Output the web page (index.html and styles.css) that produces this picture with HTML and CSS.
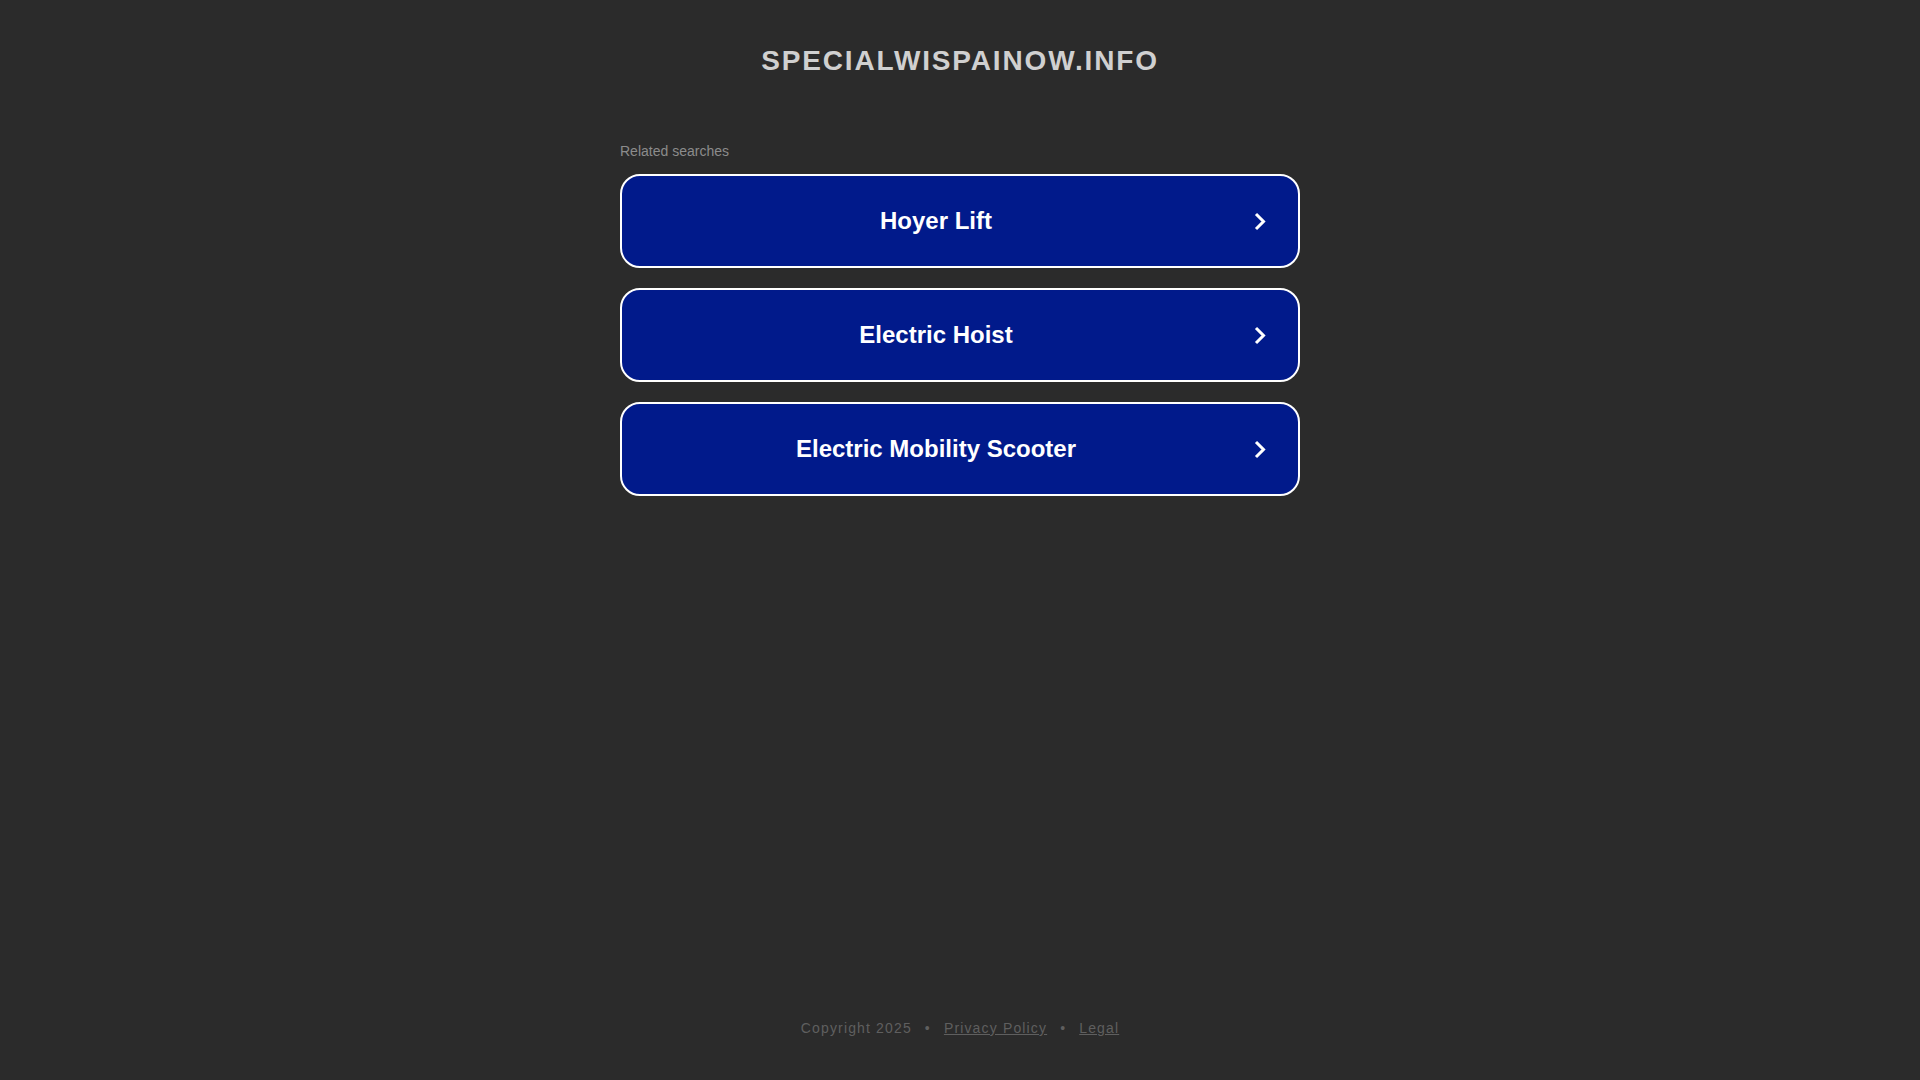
FILE: index.html
```html
<!DOCTYPE html>
<html lang="en">
<head>
<meta charset="utf-8">
<title>specialwispainow.info</title>
<link rel="stylesheet" href="styles.css">
</head>
<body>
<div class="page">
  <header class="header">
    <h1 class="domain">specialwispainow.info</h1>
  </header>
  <main class="content">
    <p class="related">Related searches</p>
    <div class="links">
      <a class="link" href="#"><span class="link-text">Hoyer Lift</span><svg class="chev" viewBox="0 0 12 19" width="12" height="19"><path d="M2 2 L9.5 9.5 L2 17" fill="none" stroke="#fff" stroke-width="3"/></svg></a>
      <a class="link" href="#"><span class="link-text">Electric Hoist</span><svg class="chev" viewBox="0 0 12 19" width="12" height="19"><path d="M2 2 L9.5 9.5 L2 17" fill="none" stroke="#fff" stroke-width="3"/></svg></a>
      <a class="link" href="#"><span class="link-text">Electric Mobility Scooter</span><svg class="chev" viewBox="0 0 12 19" width="12" height="19"><path d="M2 2 L9.5 9.5 L2 17" fill="none" stroke="#fff" stroke-width="3"/></svg></a>
    </div>
  </main>
  <footer class="footer">
    <span class="copy">Copyright 2025</span>
    <span class="dot">•</span>
    <a class="flink" href="#">Privacy Policy</a>
    <span class="dot">•</span>
    <a class="flink" href="#">Legal</a>
  </footer>
</div>
</body>
</html>
```

FILE: styles.css
```css
html, body {
  margin: 0;
  padding: 0;
  background: #2b2b2b;
}

body {
  font-family: "Liberation Sans", Arial, sans-serif;
}

.page {
  min-height: 100vh;
  display: flex;
  flex-direction: column;
  align-items: center;
}

.header {
  padding-top: 40px;
}

.domain {
  margin: 0;
  font-size: 28px;
  line-height: 42px;
  font-weight: bold;
  text-transform: uppercase;
  letter-spacing: 1.85px;
  color: #d0d0d0;
  text-align: center;
}

.content {
  width: 680px;
  margin-top: 59px;
}

.related {
  margin: 0 0 13px 0;
  font-size: 14px;
  line-height: 20px;
  color: #8c8c8c;
}

.links {
  display: flex;
  flex-direction: column;
  gap: 20px;
}

.link {
  display: flex;
  align-items: center;
  height: 94px;
  box-sizing: border-box;
  border: 2px solid #ffffff;
  border-radius: 20px;
  background: #011a8b;
  color: #ffffff;
  text-decoration: none;
}

.link-text {
  flex: 1;
  text-align: center;
  font-size: 24px;
  font-weight: bold;
}

.chev {
  display: block;
  margin-left: 4px;
  margin-right: 32px;
}

.footer {
  margin-top: auto;
  padding-bottom: 42px;
  display: flex;
  align-items: center;
  font-size: 14px;
  line-height: 20px;
  letter-spacing: 1.15px;
  color: #5f5f5f;
}

.dot {
  margin: 0 13px;
  color: #5f5f5f;
}

.flink {
  color: #5f5f5f;
  text-decoration: underline;
}
```
